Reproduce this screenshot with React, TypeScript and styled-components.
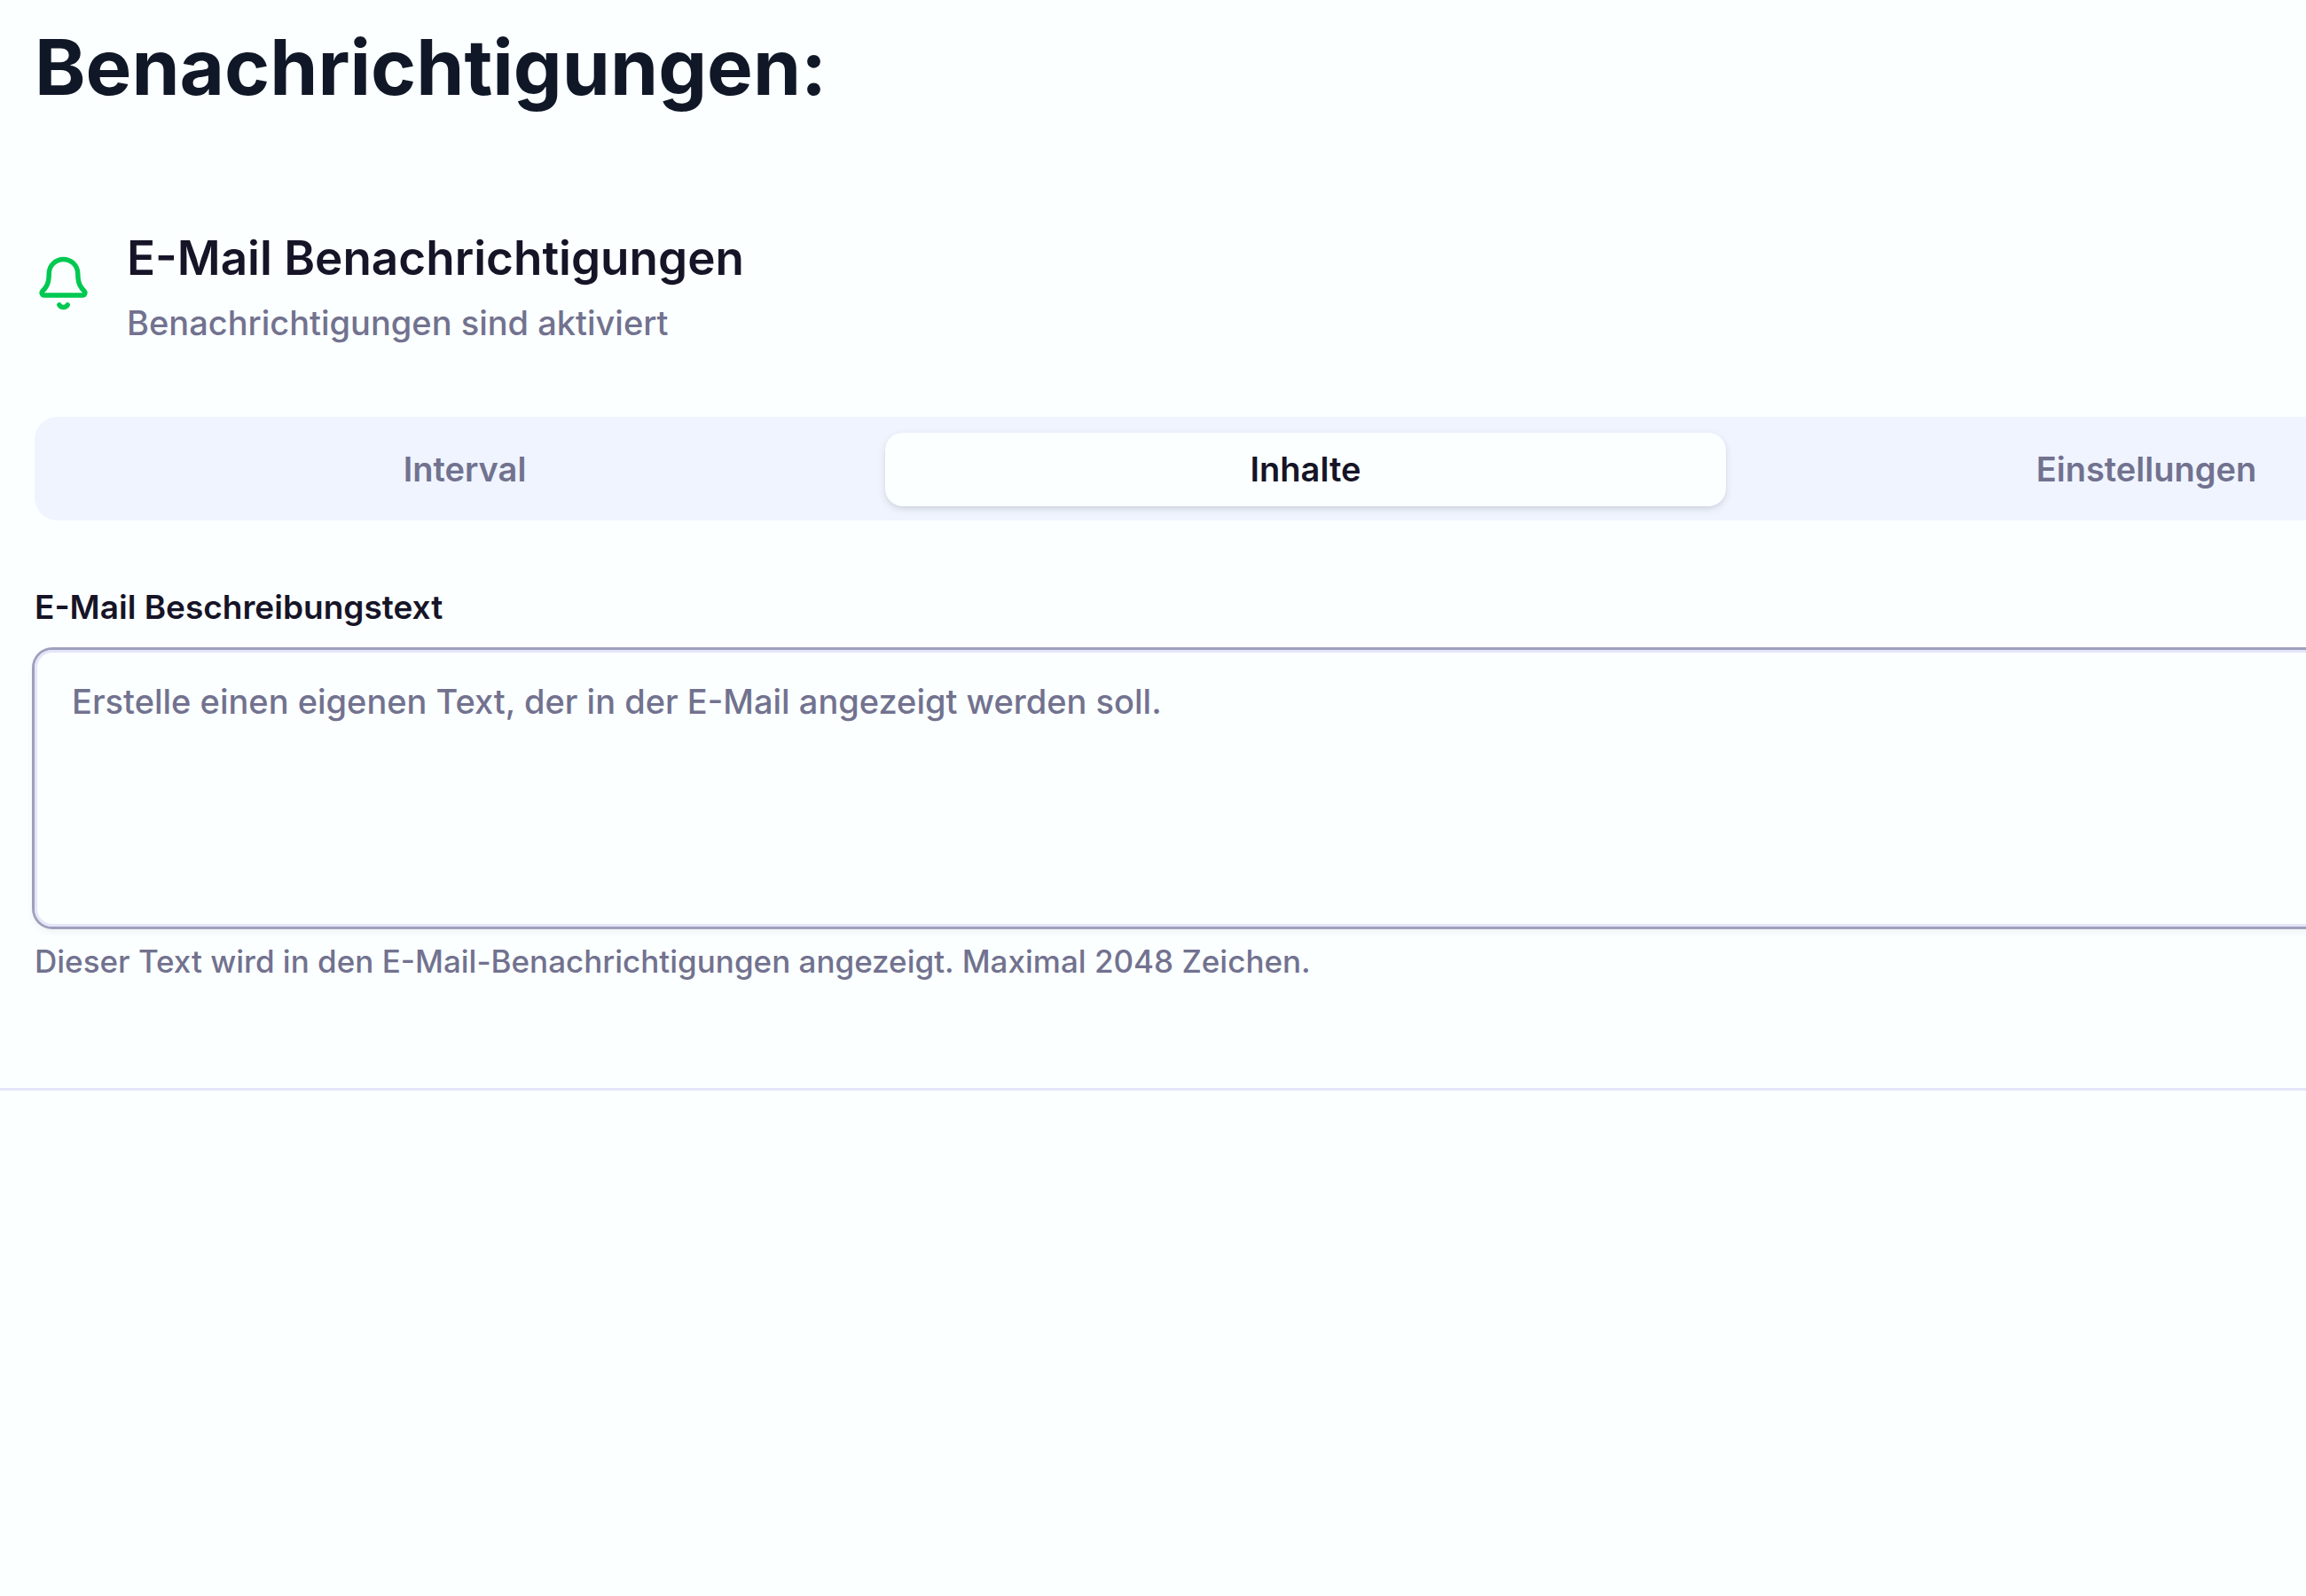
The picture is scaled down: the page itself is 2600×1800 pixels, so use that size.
import React, { useState } from "react";
import styled, { createGlobalStyle } from "styled-components";
import { Bell } from "lucide-react";

const color = {
  background: "#fbffff",
  title: "#101828",
  text: "#161427",
  muted: "#72728f",
  track: "#eff4ff",
  border: "#e3e6f7",
  ring: "#9f9fbd",
  active: "#00c951",
};

const GlobalStyle = createGlobalStyle`
  *, *::before, *::after { box-sizing: border-box; }
  body {
    margin: 0;
    overflow-x: hidden;
    background: ${color.background};
    color: ${color.text};
    font-family: Inter, "Liberation Sans", sans-serif;
    -webkit-font-smoothing: antialiased;
  }
`;

const Page = styled.main`
  overflow-x: hidden;
`;

const Section = styled.section`
  display: flex;
  flex-direction: column;
  min-width: 2944px;
  padding: 24px 39px 119px;
  border-bottom: 3px solid ${color.border};
`;

const Title = styled.h1`
  margin: 0 0 121px;
  color: ${color.title};
  font-size: 87px;
  font-weight: 700;
  line-height: 104px;
`;

const StatusRow = styled.header`
  display: flex;
  align-items: center;
  gap: 39px;
  margin-bottom: 81px;
`;

const StatusText = styled.div`
  display: flex;
  flex-direction: column;
  gap: 6px;
`;

const StatusHeading = styled.h2`
  margin: 0;
  font-size: 53px;
  font-weight: 600;
  line-height: 84px;
`;

const StatusNote = styled.p`
  margin: 0;
  color: ${color.muted};
  font-size: 38px;
  font-weight: 500;
  line-height: 50px;
`;

const TabList = styled.div`
  display: grid;
  grid-template-columns: repeat(3, 1fr);
  margin-bottom: 73px;
  padding: 18px 11px 16px;
  border-radius: 26px;
  background: ${color.track};
`;

const Tab = styled.button<{ $selected: boolean }>`
  height: 83px;
  padding: 0 39px 2px;
  border: 0;
  border-radius: 20px;
  background: ${(p) => (p.$selected ? color.background : "transparent")};
  box-shadow: ${(p) =>
    p.$selected ? "0 3px 10px rgba(0, 0, 0, 0.1), 0 3px 6px -3px rgba(0, 0, 0, 0.1)" : "none"};
  color: ${(p) => (p.$selected ? color.text : color.muted)};
  font-family: inherit;
  font-size: 38px;
  font-weight: 600;
  line-height: 50px;
  cursor: pointer;
`;

const Field = styled.div`
  display: flex;
  flex-direction: column;
`;

const Label = styled.label`
  margin-bottom: 23px;
  font-size: 37px;
  font-weight: 600;
  line-height: 50px;
`;

const TextArea = styled.textarea`
  width: 100%;
  height: 312px;
  margin: 0 0 15px;
  padding: 26px 39px;
  border: 3px solid ${color.border};
  border-radius: 20px;
  outline: 0;
  background: transparent;
  box-shadow: 0 0 0 3px ${color.ring}, 0 4px 8px 2px rgba(0, 0, 0, 0.06);
  color: ${color.text};
  font-family: inherit;
  font-size: 38px;
  font-weight: 500;
  line-height: 58px;
  resize: none;

  &::placeholder {
    color: ${color.muted};
    opacity: 1;
  }
`;

const Hint = styled.p`
  margin: 0;
  color: ${color.muted};
  font-size: 35px;
  font-weight: 500;
  line-height: 48px;
`;

const tabs = ["Interval", "Inhalte", "Einstellungen"];

export default function App() {
  const [selected, setSelected] = useState("Inhalte");

  return (
    <>
      <GlobalStyle />
      <Page>
        <Section>
          <Title>Benachrichtigungen:</Title>
          <StatusRow>
            <Bell size={65} color={color.active} strokeWidth={2} aria-hidden />
            <StatusText>
              <StatusHeading>E-Mail Benachrichtigungen</StatusHeading>
              <StatusNote>Benachrichtigungen sind aktiviert</StatusNote>
            </StatusText>
          </StatusRow>
          <TabList role="tablist">
            {tabs.map((name) => (
              <Tab
                key={name}
                type="button"
                role="tab"
                aria-selected={name === selected}
                $selected={name === selected}
                onClick={() => setSelected(name)}
              >
                {name}
              </Tab>
            ))}
          </TabList>
          <Field>
            <Label htmlFor="mail-text">E-Mail Beschreibungstext</Label>
            <TextArea
              id="mail-text"
              maxLength={2048}
              aria-describedby="mail-text-hint"
              placeholder="Erstelle einen eigenen Text, der in der E-Mail angezeigt werden soll."
            />
            <Hint id="mail-text-hint">
              Dieser Text wird in den E-Mail-Benachrichtigungen angezeigt. Maximal 2048 Zeichen.
            </Hint>
          </Field>
        </Section>
      </Page>
    </>
  );
}
